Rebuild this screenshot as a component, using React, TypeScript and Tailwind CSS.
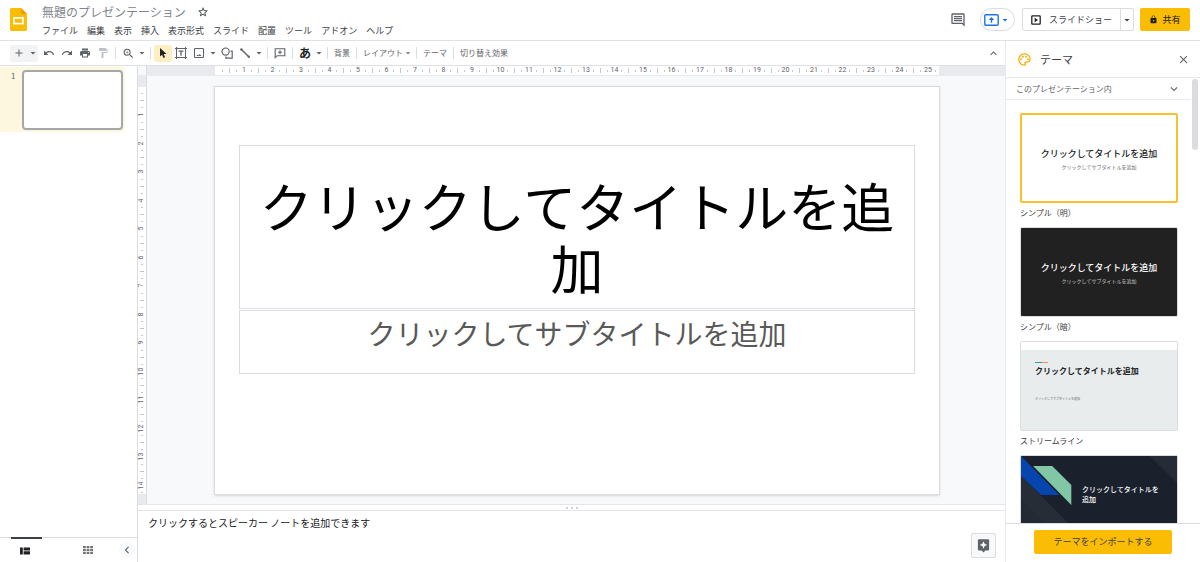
import { useState } from 'react'
import type { ReactNode } from 'react'
import {
  MdAdd, MdArrowDropDown, MdAssistant, MdChevronLeft, MdClose, MdExpandLess, MdExpandMore,
  MdFormatPaint, MdLock, MdOutlineInsertComment, MdOutlinePalette, MdPrint, MdRedo, MdStarBorder, MdUndo, MdZoomIn,
} from 'react-icons/md'

const MENUS = ['ファイル', '編集', '表示', '挿入', '表示形式', 'スライド', '配置', 'ツール', 'アドオン', 'ヘルプ']

const TITLE = 'クリックしてタイトルを追加'
const SUBTITLE = 'クリックしてサブタイトルを追加'

function Logo() {
  return (
    <svg viewBox="0 0 17 23" className="w-[17px] h-[23px] shrink-0">
      <path d="M1.6 0H11l6 6v15.4a1.6 1.6 0 0 1-1.6 1.6H1.6A1.6 1.6 0 0 1 0 21.4V1.6A1.6 1.6 0 0 1 1.6 0z" fill="#fbbc04" />
      <path d="M11 0l6 6h-6z" fill="#f29900" />
      <path d="M3.2 9h10.6v7.4H3.2zM4.8 10.7v4h7.4v-4z" fill="#fff" fillRule="evenodd" />
    </svg>
  )
}

function PresentIcon() {
  return (
    <svg viewBox="0 0 15 12" className="w-[15px] h-3 shrink-0">
      <rect x=".8" y=".8" width="13.4" height="10.4" rx="1" fill="none" stroke="#1a73e8" strokeWidth="1.4" />
      <path d="M7.5 3L10.2 6H8.2v2.8H6.8V6h-2z" fill="#1a73e8" />
    </svg>
  )
}

function PlayBoxIcon() {
  return (
    <svg viewBox="0 0 10 10" className="w-[10px] h-[10px] shrink-0">
      <rect x=".8" y=".8" width="8.4" height="8.4" rx=".6" fill="none" stroke="#202124" strokeWidth="1.3" />
      <path d="M3.6 2.7L7 5 3.6 7.3z" fill="#202124" />
    </svg>
  )
}

function CursorIcon() {
  return (
    <svg viewBox="0 0 12 12" className="w-3 h-3">
      <path d="M3 1v8.6l2.1-1.9 1.4 3.2 1.6-.7-1.4-3.1h2.9z" fill="#202124" />
    </svg>
  )
}

function TextBoxIcon() {
  return (
    <svg viewBox="0 0 12 12" className="w-3 h-3" fill="none" stroke="#5f6368">
      <rect x="1.5" y="1.5" width="9" height="9" />
      <path d="M0 1.5h3M9 1.5h3M0 10.5h3M9 10.5h3M1.5 0v3M10.5 0v3M1.5 9v3M10.5 9v3" />
      <path d="M3.6 4.2h4.8M6 4.2v4.6" strokeWidth="1.3" />
    </svg>
  )
}

function ImageIcon() {
  return (
    <svg viewBox="0 0 12 12" className="w-3 h-3">
      <rect x="1.5" y="1.5" width="9" height="9" rx=".8" fill="none" stroke="#5f6368" strokeWidth="1.1" />
      <path d="M3.4 9l1.2-1.4.9.9 1.2-1.5L8.6 9z" fill="#5f6368" />
    </svg>
  )
}

function ShapeIcon() {
  return (
    <svg viewBox="0 0 12 12" className="w-3 h-3" fill="none" stroke="#5f6368" strokeWidth="1.2">
      <circle cx="4.6" cy="4.6" r="3.6" />
      <path d="M9.6 4.2h1.6v6.9H4.8V9.4" />
    </svg>
  )
}

function LineIcon() {
  return (
    <svg viewBox="0 0 12 12" className="w-3 h-3">
      <path d="M2.4 2.4l7.4 7.4" stroke="#5f6368" strokeWidth="1.4" />
      <circle cx="2.4" cy="2.4" r="1.2" fill="#5f6368" />
      <circle cx="9.8" cy="9.8" r="1.2" fill="#5f6368" />
    </svg>
  )
}

function AddCommentIcon() {
  return (
    <svg viewBox="0 0 12 12" className="w-3 h-3" fill="none" stroke="#5f6368" strokeWidth="1.1">
      <path d="M1.2 10.6V1.8h9.6v6.9H3.1z" />
      <path d="M6 3.2v4M4 5.2h4" />
    </svg>
  )
}

function FilmstripIcon() {
  return (
    <svg viewBox="0 0 10 8" className="w-[10px] h-2" fill="#202124">
      <path d="M0 .5h2.8v7H0zM3.6.5H10v3H3.6zM3.6 4.3H10v3.2H3.6z" />
    </svg>
  )
}

function GridIcon() {
  return (
    <svg viewBox="0 0 10 8" className="w-[10px] h-2" fill="#757575">
      <path d="M0 0h2.8v2.2H0zM3.6 0h2.8v2.2H3.6zM7.2 0H10v2.2H7.2zM0 2.9h2.8v2.2H0zM3.6 2.9h2.8v2.2H3.6zM7.2 2.9H10v2.2H7.2zM0 5.8h2.8V8H0zM3.6 5.8h2.8V8H3.6zM7.2 5.8H10V8H7.2z" />
    </svg>
  )
}

function Tool({ label, active, children }: { label: string; active?: boolean; children: ReactNode }) {
  return (
    <button
      aria-label={label}
      className={`w-[18px] h-[17px] flex items-center justify-center rounded-xs cursor-pointer ${active ? 'bg-[#feefc3]' : 'hover:bg-gray-100'}`}
    >
      {children}
    </button>
  )
}

function More({ label }: { label: string }) {
  return (
    <button aria-label={label} className="w-[10px] h-[17px] flex items-center justify-center cursor-pointer">
      <MdArrowDropDown className="size-3 shrink-0" />
    </button>
  )
}

function Sep() {
  return <div className="w-px h-3 mx-[3px] bg-[#dadce0]" />
}

function Header() {
  const [name, setName] = useState('無題のプレゼンテーション')
  return (
    <header className="h-[41px] shrink-0 border-b border-[#dfe1e5] flex items-start px-[10px]">
      <div className="pt-2"><Logo /></div>
      <div className="ml-[15px] flex-1 pt-1">
        <div className="flex items-center h-4">
          <input
            aria-label="プレゼンテーション名"
            className="w-[152px] text-[12px] leading-4 text-[#80868b] outline-none"
            value={name}
            onChange={e => setName(e.target.value)}
          />
          <button aria-label="スター" className="ml-[3px] cursor-pointer"><MdStarBorder className="size-3 text-[#3c4043]" /></button>
        </div>
        <nav className="flex gap-[9px] mt-1 text-[9px] leading-[14px] text-[#3c4043]">
          {MENUS.map(m => <button key={m} className="cursor-pointer whitespace-nowrap">{m}</button>)}
        </nav>
      </div>
      <div className="flex items-center pt-2 text-[9px]">
        <button aria-label="コメント履歴" className="cursor-pointer"><MdOutlineInsertComment className="size-4 text-[#5f6368]" /></button>
        <button aria-label="会議で画面共有" className="ml-[14px] w-[35px] h-[23px] rounded-full border border-[#dadce0] flex items-center justify-center text-[#1a73e8] cursor-pointer">
          <PresentIcon />
          <MdArrowDropDown className="size-3 shrink-0" />
        </button>
        <div className="ml-[7px] h-[23px] flex border border-[#dadce0] rounded-xs text-[#3c4043]">
          <button className="w-[97px] flex items-center justify-center gap-2 cursor-pointer">
            <PlayBoxIcon />
            スライドショー
          </button>
          <button aria-label="プレゼンテーション オプション" className="w-[13px] border-l border-[#dadce0] flex items-center justify-center cursor-pointer">
            <MdArrowDropDown className="size-3 shrink-0" />
          </button>
        </div>
        <button className="ml-[6px] w-[50px] h-[23px] rounded-xs bg-[#fbbc04] text-[#202124] flex items-center justify-center gap-1 cursor-pointer">
          <MdLock className="size-[9px]" />
          共有
        </button>
      </div>
    </header>
  )
}

function Toolbar() {
  return (
    <div className="h-[25px] shrink-0 border-b border-[#dfe1e5] flex items-center pl-[10px] pr-[5px] text-[8px] text-[#5f6368]">
      <div className="flex bg-[#f1f3f4] mr-[2px] rounded-xs">
        <Tool label="新しいスライド"><MdAdd className="size-3" /></Tool>
        <More label="レイアウト付きの新しいスライド" />
      </div>
      <Tool label="元に戻す"><MdUndo className="size-3" /></Tool>
      <Tool label="やり直し"><MdRedo className="size-3" /></Tool>
      <Tool label="印刷"><MdPrint className="size-3" /></Tool>
      <Tool label="書式を貼り付け"><MdFormatPaint className="size-3 text-[#bdc1c6]" /></Tool>
      <Sep />
      <Tool label="ズーム"><MdZoomIn className="size-[13px]" /></Tool>
      <More label="ズーム率" />
      <Sep />
      <Tool label="選択" active><CursorIcon /></Tool>
      <Tool label="テキスト ボックス"><TextBoxIcon /></Tool>
      <Tool label="画像を挿入"><ImageIcon /></Tool>
      <More label="画像のオプション" />
      <Tool label="図形"><ShapeIcon /></Tool>
      <Tool label="線"><LineIcon /></Tool>
      <More label="線の種類" />
      <Sep />
      <Tool label="コメントを追加"><AddCommentIcon /></Tool>
      <Sep />
      <Tool label="入力ツール"><span className="text-[12px] leading-none font-bold text-[#202124]">あ</span></Tool>
      <More label="入力方法" />
      <Sep />
      <button className="px-[3px] cursor-pointer">背景</button>
      <Sep />
      <button className="pl-[3px] flex items-center cursor-pointer">レイアウト<MdArrowDropDown className="size-[10px]" /></button>
      <Sep />
      <button className="px-[3px] cursor-pointer">テーマ</button>
      <Sep />
      <button className="px-[3px] cursor-pointer">切り替え効果</button>
      <button aria-label="メニューを非表示" className="ml-auto cursor-pointer"><MdExpandLess className="size-[13px]" /></button>
    </div>
  )
}

function Filmstrip() {
  return (
    <aside className="w-[138px] shrink-0 border-r border-[#dadce0] flex flex-col">
      <div className="flex-1 pt-px">
        <div className="flex mr-3 pt-[3px] pb-[2px] bg-[#fef7e0] rounded-r-sm">
          <span className="w-[22px] pl-[11px] text-[8px] leading-3 text-[#5f6368]">1</span>
          <button aria-label="スライド 1" className="w-[101px] h-[60px] bg-white border-2 border-[#a4a8ad] rounded-sm cursor-pointer" />
        </div>
      </div>
      <div className="h-[25px] flex items-stretch border-t border-[#dadce0]">
        <button aria-label="フィルムストリップ表示" className="ml-[11px] -mt-px pr-1 w-[31px] border-t-2 border-[#3c4043] flex items-center justify-center cursor-pointer">
          <FilmstripIcon />
        </button>
        <button aria-label="グリッド表示" className="ml-[30px] w-[31px] flex items-center justify-center cursor-pointer">
          <GridIcon />
        </button>
        <button aria-label="フィルムストリップを非表示" className="ml-auto mr-[2px] self-center size-4 rounded-full bg-[#f8f9fa] flex items-center justify-center cursor-pointer">
          <MdChevronLeft className="size-[14px] shrink-0 text-[#5f6368]" />
        </button>
      </div>
    </aside>
  )
}

// four marks per centimetre: short, long, short, number
function Marks({ count, vertical }: { count: number; vertical?: boolean }) {
  return Array.from({ length: count }, (_, i) => {
    const n = i + 1
    return (
      <span key={n} className="flex-1 min-w-0 min-h-0 flex items-center justify-center font-['Roboto',sans-serif] text-[7px] leading-none text-[#5f6368]">
        {n % 4 === 0 ? (
          <span className={vertical ? '-rotate-90' : ''}>{n / 4}</span>
        ) : (
          <span className={`shrink-0 bg-[#c4c7cc] ${vertical ? (n % 2 === 0 ? 'w-1 h-px' : 'w-[2px] h-px') : (n % 2 === 0 ? 'h-[5px] w-px' : 'h-[2px] w-px')}`} />
        )}
      </span>
    )
  })
}

function Editor() {
  return (
    <main className="flex-1 min-w-0 flex flex-col">
      <div className="flex h-[9px] shrink-0 bg-[#e8eaed] pr-[66px]">
        <div className="w-[9px] mr-[68px] bg-[#f8f9fa] border-r border-[#dadce0]" />
        <div className="flex-1 flex bg-white pl-1 pr-px"><Marks count={101} /></div>
      </div>
      <div className="flex border-t border-[#e8eaed]">
        <div className="w-[9px] shrink-0 flex flex-col bg-[#e8eaed] pt-[11px] pb-[10px] border-r border-[#dadce0]">
          <div className="flex-1 flex flex-col bg-white pt-[3px]">
            <div className="flex-1 -mb-[2px] flex flex-col"><Marks count={57} vertical /></div>
          </div>
        </div>
        <div className="flex-1 bg-[#f8f9fa] pl-[67px] pr-[65px] pt-[10px] pb-[9px]">
          <div className="bg-white border border-[#dadce0] shadow-sm px-6 pt-[58px] pb-[120px] text-center">
            <h1 className="border border-[#dadce0] h-[164px] px-2 flex items-end justify-center text-[53px] leading-[62px] pb-[10px] text-black">{TITLE}</h1>
            <p className="mt-px border border-[#dadce0] h-[64px] text-[28px] leading-[44px] text-[#595959]">{SUBTITLE}</p>
          </div>
        </div>
      </div>
      <div className="h-[7px] shrink-0 border-y border-[#e4e6e9] flex items-center justify-center gap-[3px]">
        <span className="size-[2px] rounded-full bg-[#bdc1c6]" />
        <span className="size-[2px] rounded-full bg-[#bdc1c6]" />
        <span className="size-[2px] rounded-full bg-[#bdc1c6]" />
      </div>
      <div className="flex-1 flex justify-between pl-[10px] pr-[9px] pb-1">
        <p className="pt-1 text-[10px] leading-4 text-[#202124]">クリックするとスピーカー ノートを追加できます</p>
        <button aria-label="データ探索" className="self-end size-[25px] rounded-xs border border-[#dadce0] bg-[#f8f9fa] flex items-center justify-center cursor-pointer">
          <MdAssistant className="size-[15px] text-[#5f6368]" />
        </button>
      </div>
    </main>
  )
}

function ThemeCard({ name, className, children }: { name?: string; className: string; children: ReactNode }) {
  return (
    <button className="block w-full text-left cursor-pointer">
      <div className={`h-[90px] rounded-xs overflow-hidden ${className}`}>{children}</div>
      {name && <div className="h-6 pt-1 text-[8px] leading-3 text-[#3c4043]">{name}</div>}
    </button>
  )
}

function CenteredTheme() {
  return (
    <div className="h-full pt-1 flex flex-col items-center justify-center text-[9px] leading-[14px] font-medium whitespace-nowrap">
      {TITLE}
      <span className="text-[5px] leading-3 font-normal opacity-70">{SUBTITLE}</span>
    </div>
  )
}

function ThemePanel() {
  return (
    <aside className="w-[195px] shrink-0 flex flex-col border-l border-[#e8eaed] bg-white">
      <div className="h-[37px] shrink-0 border-b border-[#e8eaed] flex items-center pl-[11px] pr-[10px]">
        <MdOutlinePalette className="size-[15px] text-[#f9ab00]" />
        <h2 className="ml-2 text-[11px] text-[#3c4043]">テーマ</h2>
        <button aria-label="閉じる" className="ml-auto cursor-pointer"><MdClose className="size-[13px] text-[#5f6368]" /></button>
      </div>
      <div className="flex-1 min-h-0 flex overflow-hidden">
        <div className="flex-1 min-w-0">
          <button className="w-full h-[22px] border-b border-[#e8eaed] flex items-center justify-between px-[10px] text-[8px] text-[#5f6368] cursor-pointer">
            このプレゼンテーション内
            <MdExpandMore className="size-[14px]" />
          </button>
          <div className="pt-[13px] pl-[14px] pr-[13px]">
            <ThemeCard name="シンプル（明）" className="border-2 border-[#fbc02d] bg-white text-[#202124]"><CenteredTheme /></ThemeCard>
            <ThemeCard name="シンプル（暗）" className="border border-[#dadce0] bg-[#212121] text-white"><CenteredTheme /></ThemeCard>
            <ThemeCard name="ストリームライン" className="border border-[#dadce0] bg-[#e8eced] text-[#202124]">
              <div className="h-2 bg-white" />
              <div className="pl-[14px] pt-3 whitespace-nowrap">
                <div className="w-[13px] h-px flex">
                  <span className="flex-1 bg-[#26a69a]" />
                  <span className="flex-1 bg-[#ff8a65]" />
                </div>
                <div className="mt-[2px] text-[8px] leading-3 font-bold">{TITLE}</div>
                <div className="mt-4 text-[3px] leading-3 text-[#5f6368]">{SUBTITLE}</div>
              </div>
            </ThemeCard>
            <ThemeCard className="relative border border-[#dadce0] bg-[#1b212c] text-white">
              <svg viewBox="0 0 155 88" className="absolute inset-0 h-full w-full" preserveAspectRatio="none">
                <path d="M0 20l68 68H0z" fill="#262d36" />
                <path d="M0 44l44 44H0z" fill="#232a34" />
                <path d="M128 0h27v27z" fill="#252c36" />
                <path d="M0 0l38 39H20L0 20z" fill="#0645ad" />
                <path d="M12 10h19l19 19v20z" fill="#82c7a5" />
              </svg>
              <div className="relative pl-[61px] pr-3 pt-7 text-[7px] leading-[10px] font-medium">{TITLE}</div>
            </ThemeCard>
          </div>
        </div>
        <div className="w-[9px] shrink-0 pt-px"><div className="w-[6px] ml-px h-[71px] rounded-full bg-[#dadce0]" /></div>
      </div>
      <div className="h-[39px] shrink-0 border-t border-[#dadce0] px-7 pt-[6px]">
        <button className="block w-full h-6 rounded-xs bg-[#fbbc04] text-[9px] text-[#3c4043] cursor-pointer">テーマをインポートする</button>
      </div>
    </aside>
  )
}

function App() {
  return (
    <div lang="ja" className="h-screen flex flex-col bg-white font-['Noto_Sans_CJK_JP',sans-serif]">
      <Header />
      <div className="flex-1 min-h-0 flex">
        <div className="flex-1 min-w-0 flex flex-col">
          <Toolbar />
          <div className="flex-1 min-h-0 flex">
            <Filmstrip />
            <Editor />
          </div>
        </div>
        <ThemePanel />
      </div>
    </div>
  )
}

export default App
